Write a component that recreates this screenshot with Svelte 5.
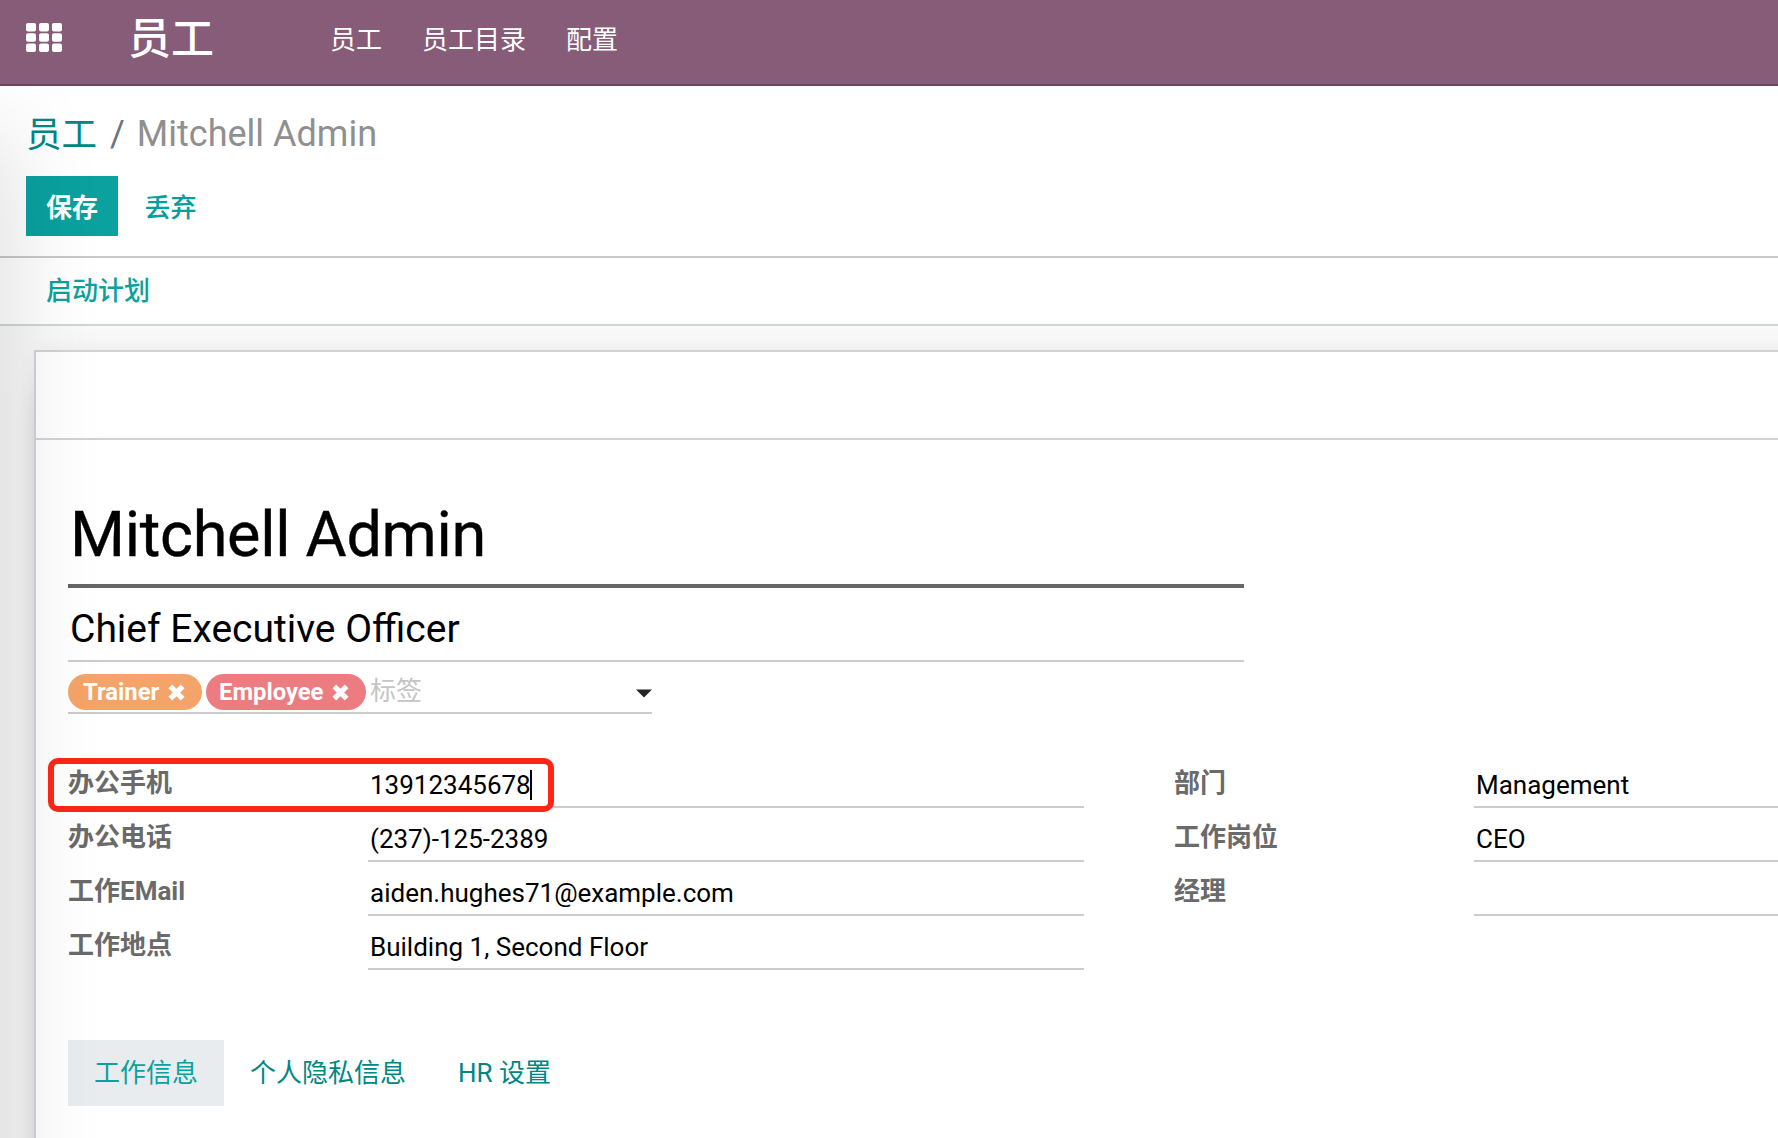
<script>
  const menus = ['员工', '员工目录', '配置'];
  const tags = [
    { name: 'Trainer', tone: 'orange' },
    { name: 'Employee', tone: 'red' }
  ];
  const contact = [
    { label: '办公手机', value: '13912345678', active: true },
    { label: '办公电话', value: '(237)-125-2389' },
    { label: '工作EMail', value: 'aiden.hughes71@example.com' },
    { label: '工作地点', value: 'Building 1, Second Floor' }
  ];
  const position = [
    { label: '部门', value: 'Management' },
    { label: '工作岗位', value: 'CEO' },
    { label: '经理', value: '' }
  ];
  const tabs = ['工作信息', '个人隐私信息', 'HR 设置'];
  const cells = [0, 1, 2, 3, 4, 5, 6, 7, 8];
</script>

<div class="app">
  <nav class="navbar">
    <svg class="apps" width="36" height="29" viewBox="0 0 36 29">
      {#each cells as c}
        <rect x={(c % 3) * 13} y={Math.floor(c / 3) * 10.3} width="10" height="8.4" rx="2" fill="#fff" />
      {/each}
    </svg>
    <span class="brand">员工</span>
    <div class="menus">
      {#each menus as m}<span>{m}</span>{/each}
    </div>
  </nav>

  <header class="control">
    <div class="crumbs"><span class="crumb">员工</span><span class="slash">/</span><span class="current">Mitchell Admin</span></div>
    <div class="actions">
      <button class="save">保存</button>
      <button class="discard">丢弃</button>
    </div>
  </header>

  <div class="statusbar"><span>启动计划</span></div>

  <main class="content">
    <section class="sheet">
      <div class="buttonbox"></div>
      <div class="body">
        <h1 class="name">Mitchell Admin</h1>
        <div class="job">Chief Executive Officer</div>
        <div class="tags">
          {#each tags as t}
            <span class="tag {t.tone}">{t.name}
              <svg width="17" height="17" viewBox="0 0 16 16"><path d="M2.2 2.2 L13.8 13.8 M13.8 2.2 L2.2 13.8" stroke="#fff" stroke-width="5" /></svg>
            </span>
          {/each}
          <span class="hint">标签</span>
          <svg class="caret" width="16" height="9" viewBox="0 0 16 9"><path d="M0 0.5H16L8 8.5Z" fill="#212529" /></svg>
        </div>

        <div class="groups">
          <div class="group left">
            {#each contact as f}
              <div class="field">
                <span class="label">{f.label}</span>
                <span class="value">{f.value}{#if f.active}<i class="cursor"></i>{/if}</span>
                {#if f.active}<div class="marker"></div>{/if}
              </div>
            {/each}
          </div>
          <div class="group right">
            {#each position as f}
              <div class="field">
                <span class="label">{f.label}</span>
                <span class="value">{f.value}</span>
              </div>
            {/each}
          </div>
        </div>

        <div class="tabs">
          {#each tabs as t, i}<span class="tab" class:selected={i === 0}>{t}</span>{/each}
        </div>
      </div>
    </section>
  </main>
  <div class="edge"><div class="shade"></div></div>
</div>

<style>
  :global(body) { overflow: hidden; }
  .app {
    position: relative;
    width: 1778px;
    height: 1138px;
    overflow: hidden;
    background: #fff;
    font-family: Roboto, 'Noto Sans CJK SC', sans-serif;
    font-size: 26px;
    color: #666;
    display: flex;
    flex-direction: column;
    box-sizing: border-box;
  }
  .app :global(*) { box-sizing: border-box; }
  .navbar {
    flex: none;
    height: 86px;
    background: #875c79;
    border-bottom: 2px solid #68465f;
    display: flex;
    color: #fff;
    padding-left: 26px;
    white-space: nowrap;
  }
  .apps { margin-top: 23px; flex: none; }
  .brand { width: 202px; padding-left: 66px; font-size: 43px; font-weight: 500; line-height: 79px; }
  .menus { display: flex; gap: 40px; padding-left: 66px; line-height: 80px; }
  .control { flex: none; height: 172px; border-bottom: 2px solid #c9c9c9; padding: 20px 26px 0; }
  .crumbs { height: 56px; line-height: 56px; font-size: 36px; display: flex; white-space: pre; }
  .crumb { color: #008784; font-size: 35.5px; line-height: 58px; width: 70px; }
  .slash { color: #6c757d; padding: 0 12px 0 14px; }
  .current { color: #8f8f8f; }
  .actions { display: flex; margin-top: 14px; }
  button { border: 0; margin: 0; font-family: inherit; font-size: 26px; height: 60px; line-height: 60px; padding: 2px 0 0; }
  .save { width: 92px; background: #0aa19e; color: #fff; font-weight: 700; }
  .discard { width: 105px; background: transparent; color: #00a09d; font-weight: 500; }
  .statusbar { flex: none; height: 68px; border-bottom: 2px solid #ced4da; padding-left: 46px; line-height: 67px; color: #0aa19e; font-weight: 500; }
  .content { flex: 1; padding: 24px 0 0 34px; background: #f9f9f9; overflow: hidden; }
  .sheet { width: 1800px; height: 1000px; background: #fff; border: 2px solid #ced4da; box-shadow: 0 10px 40px -30px #000, 0 0 20px rgba(0, 0, 0, 0.04); }
  .buttonbox { height: 88px; border-bottom: 2px solid #ced4da; }
  .body { padding: 54px 0 0 32px; color: #000; }
  .name { margin: 0; width: 1176px; height: 94px; border-bottom: 4px solid #666; padding-left: 2px; font-size: 63px; letter-spacing: -0.3px; font-weight: 400; line-height: 81px; -webkit-text-stroke: 0.4px #000; }
  .job { width: 1176px; height: 74px; border-bottom: 2px solid #ccc; padding-left: 2px; font-size: 39px; line-height: 82px; }
  .tags { width: 584px; height: 52px; border-bottom: 2px solid #ccc; padding-top: 12px; display: flex; align-items: flex-start; position: relative; }
  .tag { height: 36px; border-radius: 18px; color: #fff; font-weight: 700; font-size: 23.8px; line-height: 35px; display: flex; align-items: center; gap: 9px; margin-right: 4px; white-space: nowrap; }
  .orange { background: #f4a468; width: 134px; padding-left: 15px; }
  .red { background: #ec7c80; width: 160px; padding-left: 13px; }
  .hint { font-size: 26px; color: #c5c5c5; line-height: 35px; }
  .caret { margin: 15px 0 0 auto; }
  .groups { margin-top: 40px; display: flex; }
  .left { width: 1016px; padding-right: 0; }
  .right { margin-left: 90px; flex: 1; }
  .field { position: relative; display: flex; height: 54px; }
  .label { width: 300px; flex: none; font-weight: 700; color: #6a6a6a; line-height: 59px; }
  .value { flex: 1; height: 54px; border-bottom: 2px solid #ccc; padding-left: 2px; line-height: 62px; white-space: nowrap; }
  .cursor { display: inline-block; width: 2px; height: 30px; background: #000; vertical-align: -6px; margin: 0 -1px; }
  .marker { position: absolute; left: -20px; top: 4px; width: 506px; height: 54px; border: 6px solid #ff2616; border-radius: 10px; }
  .tabs { display: flex; margin-top: 70px; height: 66px; line-height: 67px; color: #008784; }
  .tab { padding: 0 26px; white-space: nowrap; }
  .selected { background: #e9ecef; color: #0aa19e; }
  .edge { position: absolute; left: 0; top: 86px; width: 130px; height: 1052px; overflow: hidden; pointer-events: none; }
  .shade { position: absolute; left: -60px; top: 70px; width: 40px; height: 1200px; box-shadow: 0 0 100px 20px rgba(0, 0, 0, 0.17); }
</style>
